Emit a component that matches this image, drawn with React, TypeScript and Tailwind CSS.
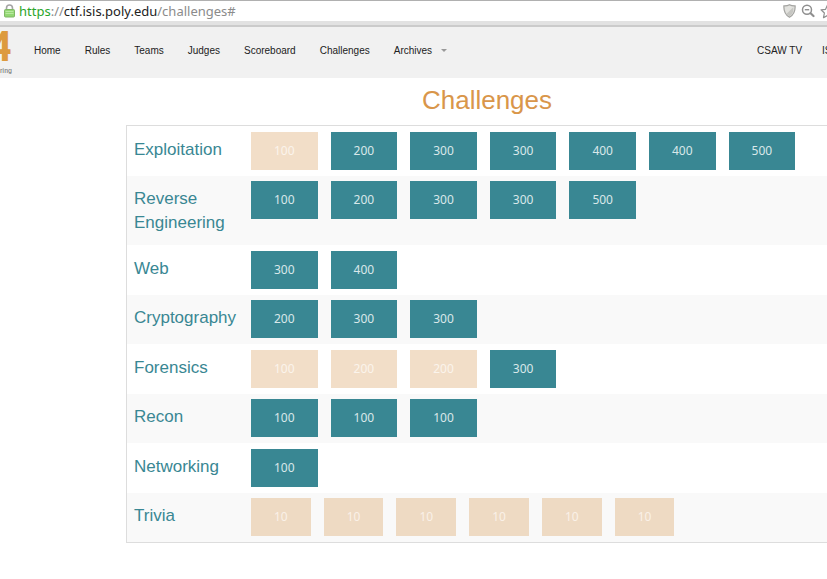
type Challenge = { points: number; solved?: boolean };
type Category = { name: string; challenges: Challenge[]; quiz?: boolean };

const open = (...points: number[]): Challenge[] => points.map((p) => ({ points: p }));
const solved = (...points: number[]): Challenge[] => points.map((p) => ({ points: p, solved: true }));

const categories: Category[] = [
  { name: "Exploitation", challenges: [...solved(100), ...open(200, 300, 300, 400, 400, 500)] },
  { name: "Reverse Engineering", challenges: open(100, 200, 300, 300, 500) },
  { name: "Web", challenges: open(300, 400) },
  { name: "Cryptography", challenges: open(200, 300, 300) },
  { name: "Forensics", challenges: [...solved(100, 200, 200), ...open(300)] },
  { name: "Recon", challenges: open(100, 100, 100) },
  { name: "Networking", challenges: open(100) },
  { name: "Trivia", quiz: true, challenges: solved(10, 10, 10, 10, 10, 10) },
];

const links = ["Home", "Rules", "Teams", "Judges", "Scoreboard", "Challenges"];

function LockIcon() {
  return (
    <svg width="11" height="14" viewBox="0 0 11 14" aria-hidden="true">
      <path d="M2.5 7V4a3 3 0 0 1 6 0v3" fill="none" stroke="#a4a4a4" strokeWidth="1.6" />
      <rect x="0.5" y="5.5" width="10" height="7.5" rx="1" fill="#93d873" stroke="#7fb766" />
      <path d="M1.5 7.5h8M1.5 9.5h8" stroke="#b9e8a2" strokeWidth="1" />
    </svg>
  );
}

function ShieldIcon() {
  return (
    <svg width="13" height="14" viewBox="0 0 13 14" aria-hidden="true">
      <path
        d="M6.5 0.7C4.8 1.6 2.8 1.9 0.9 1.8c-.3 5 1.2 9 5.6 11.4 4.4-2.4 5.9-6.4 5.6-11.4-1.9.1-3.9-.2-5.6-1.1z"
        fill="#e2e2de"
        stroke="#a3a3a0"
        strokeWidth="1.2"
      />
      <path d="M10.3 3.3 3.3 10c.8 1 1.9 1.700 3.200 2.300 3-1.700 4.300-4.800 3.800-9z" fill="#c6c6c2" />
    </svg>
  );
}

function ZoomOutIcon() {
  return (
    <svg width="14" height="14" viewBox="0 0 14 14" fill="none" stroke="#8f8f8f" aria-hidden="true">
      <circle cx="6" cy="5.7" r="4.5" strokeWidth="1.5" />
      <path d="M3.8 5.7h4.4" strokeWidth="1.4" />
      <path d="M9.6 9.3 12.5 12" strokeWidth="2.2" strokeLinecap="round" />
    </svg>
  );
}

function StarIcon() {
  return (
    <svg width="15" height="15" viewBox="0 0 15 15" aria-hidden="true">
      <path
        d="M7.5 1l1.9 4.3 4.6.5-3.4 3.2.9 4.7-4-2.3-4 2.3.9-4.7L1 5.800l4.600-.5z"
        fill="#fff"
        stroke="#8f8f8f"
        strokeWidth="1.2"
        strokeLinejoin="round"
      />
    </svg>
  );
}

function AddressBar() {
  return (
    <div className="flex h-[27px] flex-col border-t border-[#b0b0b0] bg-[#e2e2e2]">
      <div className="flex h-5 items-center bg-white pl-1 font-['Noto_Sans',sans-serif] text-[13px]">
        <LockIcon />
        <p className="ml-1 flex-1 whitespace-nowrap leading-5 text-[#8b8b8b]">
          <span className="text-[#2aa52a]">https</span>://<span className="text-[#222]">ctf.isis.poly.edu</span>
          /challenges#
        </p>
        <div className="-mr-2 flex shrink-0 items-center gap-[5px]">
          <button type="button" aria-label="Site protection"><ShieldIcon /></button>
          <button type="button" aria-label="Zoom out"><ZoomOutIcon /></button>
          <button type="button" aria-label="Bookmark"><StarIcon /></button>
        </div>
      </div>
      <div className="mt-1 h-0.5 bg-[#cbcbcb]" />
    </div>
  );
}

function NavBar() {
  return (
    <header className="flex h-[51px] items-start bg-[#f1f1f1] text-[10px] text-[#222]">
      <a
        href="#"
        className="flex w-3 shrink-0 flex-col items-end font-['Roboto_Condensed','Open_Sans_Condensed','Liberation_Sans_Narrow','Liberation_Sans',sans-serif]"
      >
        <span className="text-[43px] font-bold leading-[38px] text-[#dd9a3e]">4</span>
        <span className="text-[8px] leading-3 text-[#777]">ring</span>
      </a>
      <nav className="flex h-[47px] flex-1 items-center justify-between whitespace-nowrap pl-[22px]">
        <div className="flex items-center gap-6">
          {links.map((label) => (
            <a key={label} href="#">{label}</a>
          ))}
          <a href="#" className="flex items-center gap-[9px]">
            Archives
            <span className="border-x-3 border-t-3 border-x-transparent border-t-[#999]" />
          </a>
        </div>
        <div className="-mr-3.5 flex gap-5">
          <a href="#">CSAW TV</a>
          <a href="#">ISIS</a>
        </div>
      </nav>
    </header>
  );
}

function ChallengeRow({ category }: { category: Category }) {
  const done = category.quiz ? "bg-[#eedac3] text-[#faf1e8]" : "bg-[#f2dec8] text-[#fbf4ec]";
  return (
    <tr className="group align-top even:bg-[#f9f9f9]">
      <th
        scope="row"
        className="w-[124px] pb-[10px] pl-[7px] pt-3 text-left text-[17px] font-normal leading-6 text-[#398793] group-even:pt-[11px]"
      >
        {category.name}
      </th>
      <td className="pb-[6px] pt-[6px] group-even:pt-[5px]">
        <div className="flex gap-[13px]">
          {category.challenges.map((c, i) => (
            <button
              key={i}
              type="button"
              className={`h-[38px] px-[23px] font-['Noto_Sans',sans-serif] text-[12px] leading-4 ${
                c.solved ? done : "bg-[#398793] text-[#d9e8ea]"
              }`}
            >
              {c.points}
            </button>
          ))}
        </div>
      </td>
    </tr>
  );
}

export default function App() {
  return (
    <div className="min-h-screen overflow-hidden bg-white font-['Liberation_Sans',Arial,sans-serif]">
      <AddressBar />
      <NavBar />
      <main className="-mr-[21px] ml-[126px]">
        <h1 className="pb-[5px] pt-[2px] text-center text-[26px] leading-10 text-[#d9964a]">Challenges</h1>
        <div className="border border-[#dddddd]">
          <table className="w-full table-fixed">
            <tbody>
              {categories.map((category) => (
                <ChallengeRow key={category.name} category={category} />
              ))}
            </tbody>
          </table>
        </div>
      </main>
    </div>
  );
}
